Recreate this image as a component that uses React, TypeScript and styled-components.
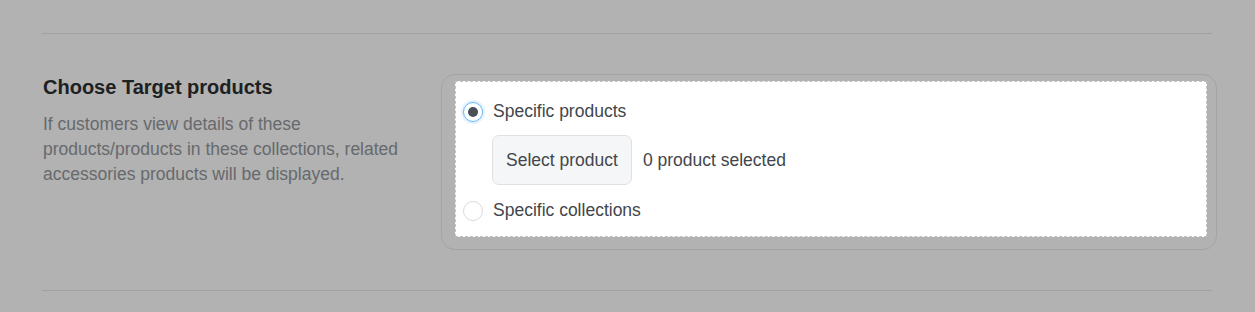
import * as React from 'react';
import styled, { createGlobalStyle } from 'styled-components';

const GlobalStyle = createGlobalStyle`
  html {
    overflow: hidden;
  }
  body {
    margin: 0;
    padding: 0;
    min-height: 100vh;
    background: #ffffff;
    font-family: "Liberation Sans", Arial, sans-serif;
  }
`;

const Page = styled.div`
  padding: 33px 43px 0 42px;
`;

const Section = styled.section`
  display: flex;
  align-items: flex-start;
  padding: 40px 0;
  border-top: 1px solid #e6e7e8;
  border-bottom: 1px solid #e6e7e8;
`;

const Intro = styled.div`
  width: 399px;
  flex-shrink: 0;
`;

const Title = styled.h2`
  margin: 0 0 0 1px;
  font-size: 20px;
  line-height: 27px;
  font-weight: 700;
  color: #2c2f32;
`;

const Description = styled.p`
  margin: 11px 0 0 1px;
  max-width: 370px;
  font-size: 17.5px;
  line-height: 25px;
  color: #94989c;
`;

const Card = styled.div`
  width: 776px;
  margin-right: -5px;
  box-sizing: border-box;
  padding: 6px 9px 12px 13px;
  border: 1px solid #ebebeb;
  border-radius: 14px;
  background: #ffffff;
`;

// tour highlight: the dim overlay is the spread shadow of the focused box
const Highlight = styled.div`
  position: relative;
  z-index: 10;
  box-sizing: border-box;
  padding: 17px 7px 13px 7px;
  background: #ffffff;
  border: 1px dashed #c2c2c2;
  box-shadow: 0 0 0 9999px rgba(0, 0, 0, 0.3);
`;

const Option = styled.label`
  display: flex;
  align-items: center;
  gap: 10px;
  font-size: 17.5px;
  line-height: 25px;
  color: #42464b;
  cursor: pointer;
`;

const Radio = styled.span<{ $checked?: boolean }>`
  display: flex;
  align-items: center;
  justify-content: center;
  width: 20px;
  height: 20px;
  box-sizing: border-box;
  border-radius: 50%;
  background: #ffffff;
  border: 1px solid ${(p) => (p.$checked ? '#6ab9f6' : '#d8dadd')};
  box-shadow: ${(p) =>
    p.$checked ? '0 0 0 2px rgba(106, 185, 246, 0.18)' : 'none'};

  &::after {
    content: '';
    display: ${(p) => (p.$checked ? 'block' : 'none')};
    width: 10px;
    height: 10px;
    border-radius: 50%;
    background: #4a5058;
  }
`;

const Picker = styled.div`
  display: flex;
  align-items: center;
  gap: 11px;
  margin: 11px 0 13px 29px;
`;

const SelectButton = styled.button`
  height: 50px;
  padding: 0 13px;
  border: 1px solid #dfe1e4;
  border-radius: 7px;
  background: #f5f6f8;
  font-family: inherit;
  font-size: 17.5px;
  color: #42464b;
  cursor: pointer;
`;

const Count = styled.span`
  font-size: 17.5px;
  line-height: 25px;
  color: #42464b;
`;

export default function App() {
  const [target, setTarget] = React.useState<'products' | 'collections'>(
    'products',
  );

  return (
    <>
      <GlobalStyle />
      <Page>
        <Section>
          <Intro>
            <Title>Choose Target products</Title>
            <Description>
              If customers view details of these products/products in these
              collections, related accessories products will be displayed.
            </Description>
          </Intro>
          <Card>
            <Highlight>
              <Option onClick={() => setTarget('products')}>
                <Radio $checked={target === 'products'} />
                Specific products
              </Option>
              <Picker>
                <SelectButton>Select product</SelectButton>
                <Count>0 product selected</Count>
              </Picker>
              <Option onClick={() => setTarget('collections')}>
                <Radio $checked={target === 'collections'} />
                Specific collections
              </Option>
            </Highlight>
          </Card>
        </Section>
      </Page>
    </>
  );
}
